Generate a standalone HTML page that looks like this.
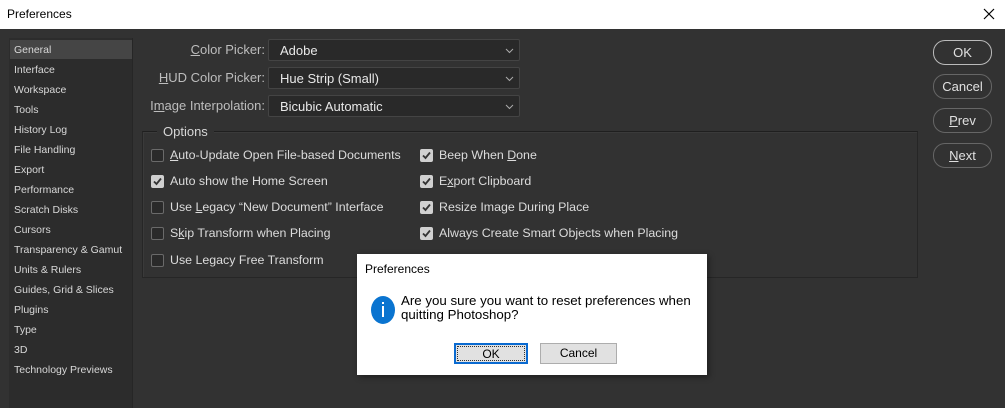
<!DOCTYPE html>
<html><head><meta charset="utf-8"><style>
*{margin:0;padding:0;box-sizing:border-box}
body{width:1005px;height:403px;overflow:hidden;background:#323232;font-family:"Liberation Sans",sans-serif;position:relative;color:#d6d6d6}
.a{position:absolute;white-space:nowrap}
#title{left:0;top:0;width:1005px;height:29px;background:#fff;color:#000;font-size:12px}
#side{left:9px;top:38px;width:124px;height:370px;background:#2c2c2c;border-right:1px solid #262626}
.si{position:absolute;left:5px;font-size:10.5px;color:#d8d8d8}
.sel{position:absolute;left:1px;top:2px;width:122px;height:19px;background:#454545}
.lbl{font-size:13px;color:#bdbdbd;text-align:right;width:200px}
.dd{height:22px;width:252px;left:268px;background:#292929;border:1px solid #444;border-radius:2px;font-size:13px;color:#e8e8e8;padding:3px 0 0 11px}
.dd svg{position:absolute;right:5px;top:8px}
#grp{left:142px;top:131px;width:776px;height:147px;border:1px solid #262626;border-top-color:#1f1f1f;box-shadow:inset 1px 1px 0 #3a3a3a}
.cb{width:13px;height:13px;border:1px solid #6a6a6a;border-radius:2px;background:#2a2a2a}
.ck{background:#d0d0d0;border-color:#d0d0d0}
.ct{font-size:12.4px;color:#dcdcdc}
.btn{left:933px;width:59px;height:25px;border:1px solid #8a8a8a;border-radius:12px;font-size:13px;color:#e0e0e0;text-align:center;line-height:23px}
#dlg{left:357px;top:254px;width:350px;height:121px;background:#fff;color:#000;box-shadow:2px 2px 6px rgba(0,0,0,.4)}
.db{position:absolute;top:89px;height:21px;font-size:12px;text-align:center;line-height:19px;background:#e1e1e1;border:1px solid #adadad}
</style></head><body>
<div id="title" class="a"><span class="a" style="left:7px;top:7px">Preferences</span>
<svg class="a" style="left:983px;top:8px" width="12" height="12"><path d="M1 1L11 11M11 1L1 11" stroke="#000" stroke-width="1.2"/></svg></div>
<div id="side" class="a"><div class="sel"></div>
<div class="si" style="top:6px">General</div>
<div class="si" style="top:26px">Interface</div>
<div class="si" style="top:46px">Workspace</div>
<div class="si" style="top:66px">Tools</div>
<div class="si" style="top:86px">History Log</div>
<div class="si" style="top:106px">File Handling</div>
<div class="si" style="top:126px">Export</div>
<div class="si" style="top:146px">Performance</div>
<div class="si" style="top:166px">Scratch Disks</div>
<div class="si" style="top:186px">Cursors</div>
<div class="si" style="top:206px">Transparency &amp; Gamut</div>
<div class="si" style="top:226px">Units &amp; Rulers</div>
<div class="si" style="top:246px">Guides, Grid &amp; Slices</div>
<div class="si" style="top:266px">Plugins</div>
<div class="si" style="top:286px">Type</div>
<div class="si" style="top:306px">3D</div>
<div class="si" style="top:326px">Technology Previews</div>
</div>
<div class="a lbl" style="left:65px;top:42px"><u>C</u>olor Picker:</div>
<div class="a lbl" style="left:65px;top:70px"><u>H</u>UD Color Picker:</div>
<div class="a lbl" style="left:65px;top:98px">I<u>m</u>age Interpolation:</div>
<div class="a dd" style="top:39px">Adobe<svg width="9" height="6"><path d="M1 1L4.5 4.5L8 1" stroke="#aaa" fill="none"/></svg></div>
<div class="a dd" style="top:67px">Hue Strip (Small)<svg width="9" height="6"><path d="M1 1L4.5 4.5L8 1" stroke="#aaa" fill="none"/></svg></div>
<div class="a dd" style="top:95px">Bicubic Automatic<svg width="9" height="6"><path d="M1 1L4.5 4.5L8 1" stroke="#aaa" fill="none"/></svg></div>
<div id="grp" class="a"></div>
<div class="a" style="left:157px;top:124px;background:#323232;padding:0 6px;font-size:13px;color:#d6d6d6;line-height:16px">Options</div>
<div class="a cb" style="left:151px;top:149px"></div><div class="a ct" style="left:170px;top:148px"><u>A</u>uto-Update Open File-based Documents</div>
<div class="a cb ck" style="left:151px;top:175px"><svg width="11" height="11" style="position:absolute;left:0;top:0"><path d="M2 5.5L4.5 8L9 2.5" stroke="#333" stroke-width="1.8" fill="none"/></svg></div><div class="a ct" style="left:170px;top:174px">Auto show the Home Screen</div>
<div class="a cb" style="left:151px;top:201px"></div><div class="a ct" style="left:170px;top:200px">Use <u>L</u>egacy “New Document” Interface</div>
<div class="a cb" style="left:151px;top:227px"></div><div class="a ct" style="left:170px;top:226px">S<u>k</u>ip Transform when Placing</div>
<div class="a cb" style="left:151px;top:254px"></div><div class="a ct" style="left:170px;top:253px">Use Legacy Free Transform</div>
<div class="a cb ck" style="left:420px;top:149px"><svg width="11" height="11" style="position:absolute;left:0;top:0"><path d="M2 5.5L4.5 8L9 2.5" stroke="#333" stroke-width="1.8" fill="none"/></svg></div><div class="a ct" style="left:439px;top:148px">Beep When <u>D</u>one</div>
<div class="a cb ck" style="left:420px;top:175px"><svg width="11" height="11" style="position:absolute;left:0;top:0"><path d="M2 5.5L4.5 8L9 2.5" stroke="#333" stroke-width="1.8" fill="none"/></svg></div><div class="a ct" style="left:439px;top:174px">E<u>x</u>port Clipboard</div>
<div class="a cb ck" style="left:420px;top:201px"><svg width="11" height="11" style="position:absolute;left:0;top:0"><path d="M2 5.5L4.5 8L9 2.5" stroke="#333" stroke-width="1.8" fill="none"/></svg></div><div class="a ct" style="left:439px;top:200px">Resize Ima<u>g</u>e During Place</div>
<div class="a cb ck" style="left:420px;top:227px"><svg width="11" height="11" style="position:absolute;left:0;top:0"><path d="M2 5.5L4.5 8L9 2.5" stroke="#333" stroke-width="1.8" fill="none"/></svg></div><div class="a ct" style="left:439px;top:226px">Always Create Smart Ob<u>j</u>ects when Placing</div>
<div class="a btn" style="top:40px;border-color:#bbb">OK</div>
<div class="a btn" style="top:74px;border-color:#666">Cancel</div>
<div class="a btn" style="top:108px;border-color:#666"><u>P</u>rev</div>
<div class="a btn" style="top:143px;border-color:#666"><u>N</u>ext</div>
<div id="dlg" class="a">
<div class="a" style="left:8px;top:8px;font-size:12px">Preferences</div>
<svg class="a" style="left:13px;top:41px" width="26" height="30"><ellipse cx="13" cy="15" rx="12" ry="14" fill="#0a74d0"/><rect x="12" y="11" width="2" height="11" fill="#fff"/><rect x="12" y="7" width="2" height="2" fill="#fff"/></svg>
<div class="a" style="left:44px;top:40px;font-size:13.3px;line-height:14px">Are you sure you want to reset preferences when<br>quitting Photoshop?</div>
<div class="db" style="left:97px;width:74px;border:2px solid #0a6ad0;outline:1px dotted #333;outline-offset:-4px">OK</div>
<div class="db" style="left:183px;width:77px">Cancel</div>
</div>
</body></html>
